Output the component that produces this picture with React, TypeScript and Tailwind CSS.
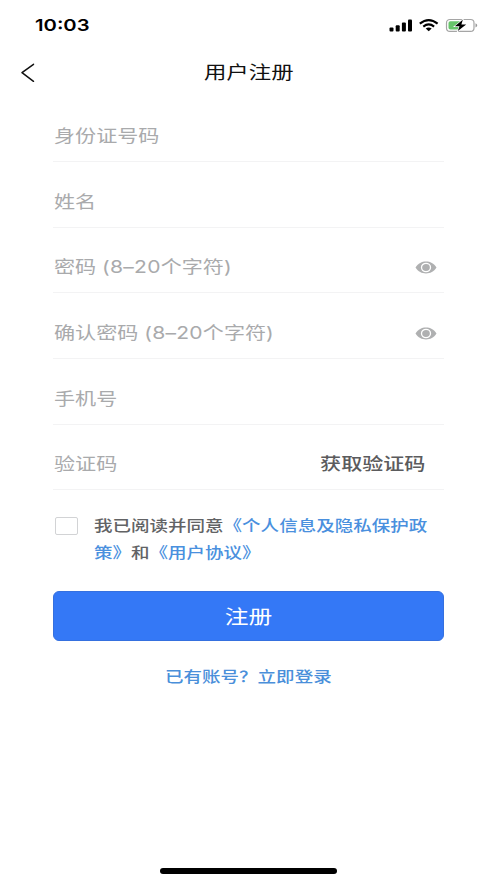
import type { ReactNode } from "react";

function Wide({ children, className = "" }: { children: ReactNode; className?: string }) {
  return <span className={`inline-block whitespace-nowrap scale-x-[1.219] ${className}`}>{children}</span>;
}

function Eye() {
  return (
    <svg width="22" height="13" viewBox="0 0 22 13" aria-hidden="true">
      <path d="M0.500 6.500C3.200 2.300 6.800 0.600 11 0.600s7.800 1.700 10.500 5.900C18.800 10.700 15.200 12.400 11 12.400S3.200 10.700 0.500 6.500Z" fill="#afb0b1" />
      <ellipse cx="11" cy="6.500" rx="4.500" ry="4.100" fill="#afb0b1" stroke="#fff" strokeWidth="1.300" />
    </svg>
  );
}

function Field({ label, hint, children }: { label: string; hint?: boolean; children?: ReactNode }) {
  return (
    <div className="flex h-[65.6px] items-end justify-between border-b border-[#f3f3f4] pb-[13px] pl-[0.5px]">
      <Wide className="origin-left text-[17.3px] leading-6 text-[#a9aaac]">
        {label}
        {hint && (
          <>
            {" "}<span className="tracking-[0.2px]">(8–20</span>个字符)
          </>
        )}
      </Wide>
      {children}
    </div>
  );
}

function StatusBar() {
  return (
    <div className="flex h-[51px] items-center justify-between pr-[18px] pb-[2px] pl-[35px]">
      <Wide className="origin-left text-[16.6px] leading-6 font-semibold text-black">10:03</Wide>
      <svg width="90" height="18" viewBox="0 0 90 18" aria-hidden="true">
        <g fill="#000">
          <rect x="0.500" y="11.500" width="4" height="4" rx="1" />
          <rect x="6.700" y="9.300" width="4" height="6.200" rx="1" />
          <rect x="12.900" y="6.500" width="4" height="9" rx="1" />
          <rect x="19" y="3.500" width="4" height="12" rx="1" />
        </g>
        <g fill="none" stroke="#000" strokeWidth="2.100">
          <path d="M30.800 7.600Q39.700 0.500 48.600 7.600" />
          <path d="M34.300 10.600Q39.700 6.200 45.100 10.600" />
        </g>
        <path d="M36.700 12.500Q39.700 10.300 42.700 12.500L39.700 15.300Z" fill="#000" />
        <rect x="57.500" y="3.500" width="27.500" height="11.800" rx="3.400" fill="none" stroke="#a5a5a5" strokeWidth="1.200" />
        <rect x="59.500" y="5.300" width="12.500" height="8.200" rx="1.800" fill="#67c56b" />
        <path d="M86.500 7.300Q90 9.400 86.500 11.500Z" fill="#999" />
        <path d="M73.800 3.800L65.800 10.300H70.500L68.800 15L77.200 8.400H72.400Z" fill="#000" stroke="#fff" strokeWidth="1.300" paintOrder="stroke" />
      </svg>
    </div>
  );
}

export default function App() {
  return (
    <div className="flex h-[883px] w-[497px] flex-col overflow-hidden bg-white font-['Inter','Noto_Sans_CJK_SC',sans-serif]">
      <StatusBar />
      <header className="grid h-[45.6px] grid-cols-[1fr_auto_1fr] items-start pt-[9px]">
        <button className="mt-[3px] ml-5 w-4" aria-label="返回">
          <svg width="16" height="20" viewBox="0 0 16 20" fill="none" stroke="#111" strokeWidth="1.500" strokeLinecap="round" strokeLinejoin="round">
            <path d="M13.500 1.300L2 9.700L13.500 18.300" />
          </svg>
        </button>
        <h1 className="leading-6"><Wide className="text-[18.4px] leading-6 text-[#111]">用户注册</Wide></h1>
      </header>

      <main className="flex flex-col px-[53px]">
        <Field label="身份证号码" />
        <Field label="姓名" />
        <Field label="密码" hint>
          <div className="mr-[7px] mb-[5px]"><Eye /></div>
        </Field>
        <Field label="确认密码" hint>
          <div className="mr-[7px] mb-[5px]"><Eye /></div>
        </Field>
        <Field label="手机号" />
        <Field label="验证码">
          <button className="mr-[19px] text-[17.3px] leading-6 font-medium text-[#5b5b5d]">
            <Wide className="origin-right">获取验证码</Wide>
          </button>
        </Field>

        <div className="mt-[22px] flex pl-[2px]">
          <span className="mt-[5px] h-[18px] w-[23px] shrink-0 rounded-[2px] border border-[#d2d3d5]" />
          <p className="ml-[16px] flex flex-col text-[15.2px] leading-[27px] font-medium text-[#626365]">
            <Wide className="origin-left">我已阅读并同意<span className="text-[#4a90de]">《个人信息及隐私保护政</span></Wide>
            <Wide className="origin-left"><span className="text-[#4a90de]">策》</span>和<span className="text-[#4a90de]">《用户协议》</span></Wide>
          </p>
        </div>

        <button className="mt-[25px] flex h-[50px] items-center justify-center rounded-[6px] border border-[#3570df] bg-[#3478f6] pt-[2px] text-[19.5px] text-white">
          <Wide>注册</Wide>
        </button>
        <div className="mt-[24px] text-center text-[15.2px] leading-6 font-medium text-[#4a8fda]">
          <Wide>已有账号？立即登录</Wide>
        </div>
      </main>
      <div className="mx-auto mt-auto mb-[9px] h-[6px] w-[177px] rounded-full bg-black" />
    </div>
  );
}
